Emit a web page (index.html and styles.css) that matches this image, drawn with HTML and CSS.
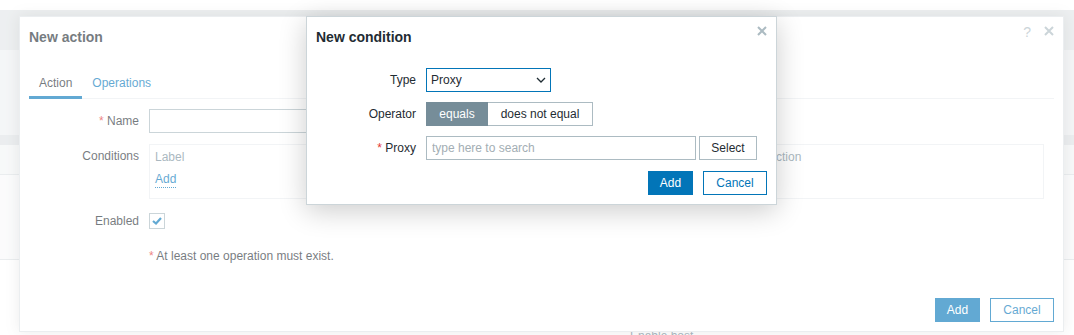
FILE: index.html
```html
<!DOCTYPE html>
<html lang="en">
<head>
    <meta charset="UTF-8">
    <title>New condition</title>
    <link rel="stylesheet" href="styles.css">
</head>
<body>
    <div class="page">
        <div class="page-top"></div>
        <div class="page-head"></div>
        <div class="page-main">
            <div class="page-band"></div>
            <div class="page-row row-short"></div>
            <div class="page-row row-tall"></div>
            <div class="page-row row-last">Enable host</div>
        </div>
    </div>

    <div class="dialog dialog-action">
        <div class="dialog-head">
            <h4>New action</h4>
            <div class="head-icons">
                <span class="help">?</span>
                <svg class="close" width="10" height="10" viewBox="0 0 10 10"><path d="M1 1L9 9M9 1L1 9"/></svg>
            </div>
        </div>
        <div class="dialog-body">
            <ul class="tabs">
                <li class="tab active">Action</li>
                <li class="tab">Operations</li>
            </ul>
            <div class="form form-action">
                <label class="form-label"><span class="req">*</span> Name</label>
                <div class="form-field"><input class="text-input name-input" type="text"></div>

                <label class="form-label">Conditions</label>
                <div class="form-field">
                    <div class="cond-box">
                        <div class="cond-head">
                            <span>Label</span>
                            <span>Name</span>
                            <span>Action</span>
                        </div>
                        <a class="link-add">Add</a>
                    </div>
                </div>

                <label class="form-label">Enabled</label>
                <div class="form-field field-check">
                    <span class="checkbox">
                        <svg width="10" height="8" viewBox="0 0 10 8"><path d="M1 4L4 6.5L9 1"/></svg>
                    </span>
                </div>

                <div></div>
                <div class="form-field note"><span class="req">*</span> At least one operation must exist.</div>
            </div>
        </div>
        <div class="dialog-foot">
            <button class="btn btn-primary">Add</button>
            <button class="btn btn-alt">Cancel</button>
        </div>
    </div>

    <div class="overlay-bg"></div>

    <div class="dialog dialog-condition">
        <div class="dialog-head">
            <h4>New condition</h4>
            <div class="head-icons">
                <svg class="close" width="10" height="10" viewBox="0 0 10 10"><path d="M1 1L9 9M9 1L1 9"/></svg>
            </div>
        </div>
        <div class="dialog-body">
            <div class="form form-condition">
                <label class="form-label">Type</label>
                <div class="form-field">
                    <div class="select">
                        <span>Proxy</span>
                        <svg width="10" height="6" viewBox="0 0 10 6"><path d="M1 1L5 5L9 1"/></svg>
                    </div>
                </div>

                <label class="form-label">Operator</label>
                <div class="form-field">
                    <div class="radio-list">
                        <span class="radio checked">equals</span>
                        <span class="radio">does not equal</span>
                    </div>
                </div>

                <label class="form-label"><span class="req">*</span> Proxy</label>
                <div class="form-field field-proxy">
                    <input class="text-input proxy-input" type="text" placeholder="type here to search">
                    <button class="btn btn-grey">Select</button>
                </div>
            </div>
        </div>
        <div class="dialog-foot">
            <button class="btn btn-primary">Add</button>
            <button class="btn btn-alt">Cancel</button>
        </div>
    </div>
</body>
</html>
```

FILE: styles.css
```css
* {
    margin: 0;
    padding: 0;
    box-sizing: border-box;
}

body {
    font-family: 'Liberation Sans', Arial, sans-serif;
    font-size: 12px;
    line-height: 16px;
    color: #1f2c33;
    background: #ebeef0;
    position: relative;
    width: 1074px;
    height: 335px;
    overflow: hidden;
}

/* page behind the dialogs */
.page {
    height: 335px;
    overflow: hidden;
}

.page-top {
    height: 10px;
    background: #fff;
}

.page-head {
    height: 40px;
    background: #e2e6e8;
}

.page-main {
    background: #eef0f2;
    height: 285px;
    overflow: hidden;
}

.page-band {
    margin-top: 85px;
    height: 10px;
    background: #dfe3e6;
}

.page-row {
    border-bottom: 1px solid #dde2e5;
    background: #f3f5f6;
}

.row-short {
    height: 30px;
}

.row-tall {
    height: 85px;
    background: #f8f9fa;
}

.row-last {
    border: none;
    background: #fff;
    height: 80px;
    padding: 68px 0 0 630px;
    color: #768d99;
}

/* dialogs */
.dialog {
    position: absolute;
    background: #fff;
    border: 1px solid #dfe4e7;
    display: flex;
    flex-direction: column;
}

.dialog-action {
    left: 19px;
    top: 16px;
    width: 1045px;
    height: 316px;
    box-shadow: 0 0 14px rgba(0,0,0,0.12);
}

.dialog-condition {
    left: 306px;
    top: 16px;
    width: 471px;
    height: 189px;
    border-color: #ccd5d9;
    box-shadow: 0 6px 26px rgba(0,0,0,0.2);
    z-index: 3;
}

.overlay-bg {
    position: absolute;
    inset: 0;
    background: rgba(255,255,255,0.38);
    z-index: 2;
}

.dialog-head {
    height: 40px;
    padding: 0 9px;
    display: flex;
}

.dialog-head h4 {
    font-size: 14px;
    font-weight: bold;
    line-height: 40px;
}

.head-icons {
    margin-left: auto;
    padding-top: 7px;
    display: flex;
    gap: 13px;
    color: #acbbc2;
}

.help {
    font-size: 14px;
    line-height: 14px;
    padding-top: 1px;
}

.close {
    margin-top: 2px;
    fill: none;
    stroke: #acbbc2;
    stroke-width: 2;
}

.dialog-body {
    padding: 0 9px;
}

.dialog-action .dialog-body {
    padding-top: 9px;
}

.dialog-condition .dialog-body {
    padding-top: 11px;
}

.tabs {
    list-style: none;
    display: flex;
    border-bottom: 1px solid #ebeef0;
    height: 33px;
}

.tab {
    padding: 9px 10px 5px;
    line-height: 16px;
    color: #0275b8;
    border-bottom: 3px solid transparent;
    height: 33px;
}

.tab.active {
    color: #1f2c33;
    border-bottom-color: #0275b8;
}

.form {
    display: grid;
    row-gap: 10px;
    column-gap: 10px;
    align-items: start;
}

.form-action {
    grid-template-columns: 110px 1fr;
    padding-top: 10px;
}

.form-condition {
    grid-template-columns: 100px 1fr;
}

.form-label {
    text-align: right;
    line-height: 24px;
}

.form-action .form-label,
.note {
    line-height: 25px;
}

.req {
    color: #e33734;
}

.text-input {
    height: 24px;
    border: 1px solid #acbbc2;
    background: #fff;
    font-family: inherit;
    font-size: 12px;
    padding: 0 5px;
    color: #1f2c33;
    outline: none;
}

.text-input::placeholder {
    color: #a3aeb4;
}

.name-input {
    width: 453px;
}

.cond-box {
    margin-right: 10px;
    height: 55px;
    border: 1px solid #ebeef0;
    padding: 4px 5px;
}

.cond-head {
    display: grid;
    grid-template-columns: 310px 303px auto;
    color: #768d99;
    height: 16px;
}

.link-add {
    display: inline-block;
    margin-top: 7px;
    color: #0275b8;
    border-bottom: 1px dotted #0275b8;
    line-height: 15px;
}

.field-check {
    height: 24px;
    display: flex;
    align-items: center;
}

.checkbox {
    width: 16px;
    height: 16px;
    border: 1px solid #acbbc2;
    display: flex;
    align-items: center;
    justify-content: center;
}

.checkbox svg {
    fill: none;
    stroke: #0275b8;
    stroke-width: 2.2;
}

.select {
    width: 125px;
    height: 24px;
    border: 1px solid #0275b8;
    display: flex;
    align-items: center;
    padding: 0 4px 0 4px;
}

.select svg {
    margin-left: auto;
    fill: none;
    stroke: #1f2c33;
    stroke-width: 1.3;
}

.radio-list {
    display: flex;
}

.radio {
    height: 24px;
    line-height: 22px;
    border: 1px solid #acbbc2;
    text-align: center;
    background: #fff;
}

.radio.checked {
    width: 62px;
    background: #768d99;
    border-color: #768d99;
    color: #fff;
}

.radio + .radio {
    width: 105px;
    border-left: none;
}

.field-proxy {
    display: flex;
    gap: 3px;
}

.proxy-input {
    width: 270px;
}

.btn {
    height: 24px;
    padding: 0;
    border: 1px solid #0275b8;
    font-family: inherit;
    font-size: 12px;
    background: #fff;
    color: #0275b8;
}

.btn-primary {
    width: 45px;
    background: #0275b8;
    color: #fff;
}

.btn-alt {
    width: 64px;
}

.btn-grey {
    width: 58px;
    border-color: #acbbc2;
    color: #1f2c33;
}

.dialog-foot {
    margin-top: auto;
    display: flex;
    justify-content: flex-end;
    gap: 10px;
    padding: 0 9px 9px;
}
```
